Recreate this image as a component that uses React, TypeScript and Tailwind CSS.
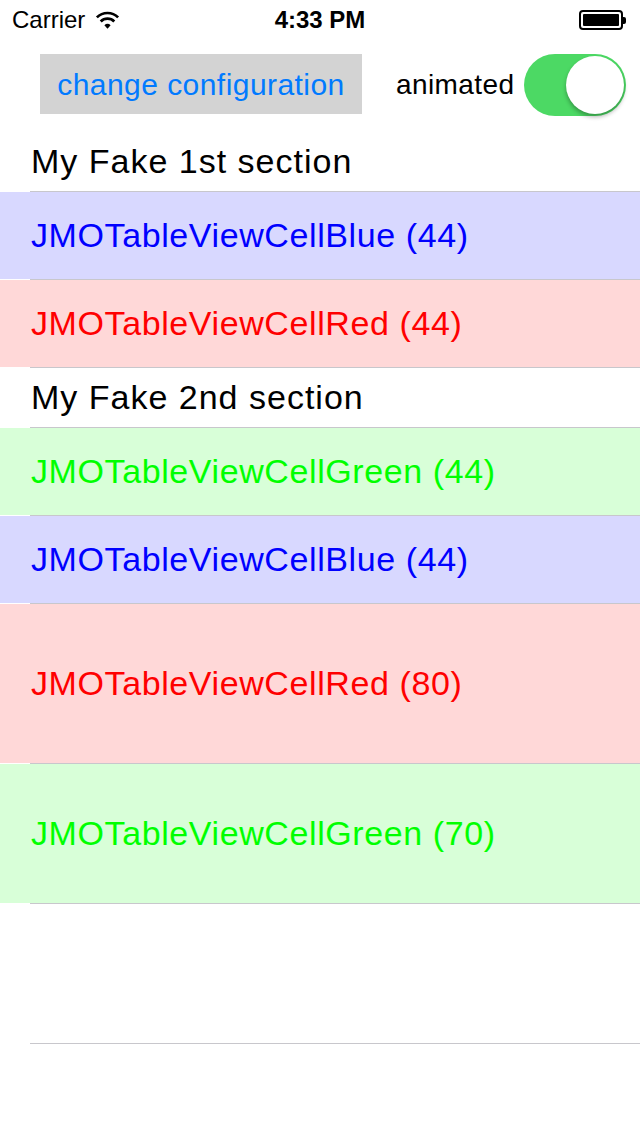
import React from "react";

const font = { fontFamily: '"Liberation Sans", Arial, sans-serif' };

function Sep() {
  return (
    <div className="h-px bg-white">
      <div className="ml-[30px] h-px bg-[#c8c7cc]" />
    </div>
  );
}

function Header({ text }: { text: string }) {
  return (
    <div>
      <div className="h-[59px] flex items-center pl-[31px] text-[34px] tracking-[1px] text-black bg-white">{text}</div>
      <Sep />
    </div>
  );
}

function Cell({ text, h, bg, color }: { text: string; h: string; bg: string; color: string }) {
  return (
    <div>
      <div className={`${h} ${bg} ${color} flex items-center pl-[31px] text-[34px] tracking-[0.6px]`}>{text}</div>
      <Sep />
    </div>
  );
}

export default function App() {
  return (
    <div className="w-[640px] h-[1136px] bg-white overflow-hidden" style={font}>
      {/* status bar */}
      <div className="h-[40px] flex items-center justify-between px-[12px] relative text-black">
        <div className="flex items-center gap-[10px] text-[24px]">
          <span>Carrier</span>
          <svg width="25" height="19" viewBox="0 0 24 18">
            <path d="M12 17 L9 13.5 A4.5 4.5 0 0 1 15 13.5 Z" fill="#000" />
            <path d="M5.5 10 A9 9 0 0 1 18.5 10" stroke="#000" strokeWidth="2.6" fill="none" />
            <path d="M1.8 6 A14.5 14.5 0 0 1 22.2 6" stroke="#000" strokeWidth="2.6" fill="none" />
          </svg>
        </div>
        <div className="absolute left-0 right-0 text-center text-[24px] font-bold pointer-events-none">4:33 PM</div>
        <div className="flex items-center mr-[2px]">
          <div className="w-[44px] h-[20px] border-[2px] border-black rounded-[4px] p-[2px]">
            <div className="w-full h-full bg-black rounded-[1px]" />
          </div>
          <div className="w-[3px] h-[7px] bg-black rounded-r-[2px]" />
        </div>
      </div>
      {/* controls */}
      <div className="h-[92px] flex items-start pt-[14px] pl-[40px]">
        <div className="w-[322px] h-[60px] bg-[#d3d3d3] flex items-center justify-center text-[30px] tracking-[0.45px] text-[#007aff]">
          change configuration
        </div>
        <div className="ml-[34px] h-[62px] flex items-center text-[28px] tracking-[0.4px] text-black">animated</div>
        <div className="ml-[10px] w-[102px] h-[62px] rounded-full bg-[#4cd964] relative">
          <div className="absolute right-[2px] top-[2px] w-[58px] h-[58px] rounded-full bg-white shadow-[0_3px_4px_rgba(0,0,0,0.3)]" />
        </div>
      </div>
      {/* table */}
      <div>
        <Header text="My Fake 1st section" />
        <Cell text="JMOTableViewCellBlue (44)" h="h-[87px]" bg="bg-[#d8d8ff]" color="text-[#0000ff]" />
        <Cell text="JMOTableViewCellRed (44)" h="h-[87px]" bg="bg-[#ffd8d8]" color="text-[#ff0000]" />
        <Header text="My Fake 2nd section" />
        <Cell text="JMOTableViewCellGreen (44)" h="h-[87px]" bg="bg-[#d8ffd8]" color="text-[#00ff00]" />
        <Cell text="JMOTableViewCellBlue (44)" h="h-[87px]" bg="bg-[#d8d8ff]" color="text-[#0000ff]" />
        <Cell text="JMOTableViewCellRed (80)" h="h-[159px]" bg="bg-[#ffd8d8]" color="text-[#ff0000]" />
        <Cell text="JMOTableViewCellGreen (70)" h="h-[139px]" bg="bg-[#d8ffd8]" color="text-[#00ff00]" />
        <div className="h-[139px]" />
        <Sep />
      </div>
    </div>
  );
}
